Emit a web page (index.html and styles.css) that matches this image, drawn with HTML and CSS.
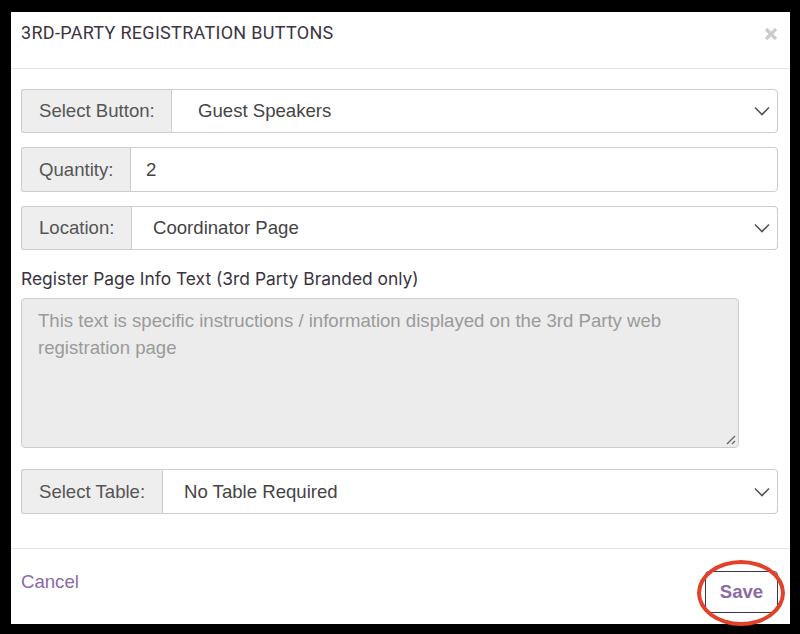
FILE: index.html
```html
<!DOCTYPE html>
<html>
<head>
<meta charset="utf-8">
<link rel="stylesheet" href="styles.css">
</head>
<body>
<div class="modal">
  <div class="modal-header">
    <h4 class="modal-title">3RD-PARTY REGISTRATION BUTTONS</h4>
    <svg class="close" viewBox="0 0 14 14"><path d="M2 2 L12 12 M12 2 L2 12" stroke="#cccccc" stroke-width="3.4"/></svg>
  </div>
  <div class="modal-body">
    <div class="input-group">
      <span class="addon addon-button">Select Button:</span>
      <div class="control select wide-pad">Guest Speakers<svg class="chev" viewBox="0 0 16 10"><path d="M1 1.5 L8 8.5 L15 1.5" fill="none" stroke="#555" stroke-width="1.6"/></svg></div>
    </div>
    <div class="input-group">
      <span class="addon addon-qty">Quantity:</span>
      <div class="control qty">2</div>
    </div>
    <div class="input-group">
      <span class="addon addon-loc">Location:</span>
      <div class="control select">Coordinator Page<svg class="chev" viewBox="0 0 16 10"><path d="M1 1.5 L8 8.5 L15 1.5" fill="none" stroke="#555" stroke-width="1.6"/></svg></div>
    </div>
    <label class="field-label">Register Page Info Text (3rd Party Branded only)</label>
    <div class="textarea">
      <span class="placeholder">This text is specific instructions / information displayed on the 3rd Party web registration page</span>
      <svg class="grip" viewBox="0 0 12 12"><path d="M11 3 L3 11 M11 8 L8 11" stroke="#666" stroke-width="1.3"/></svg>
    </div>
    <div class="input-group last">
      <span class="addon addon-table">Select Table:</span>
      <div class="control select">No Table Required<svg class="chev" viewBox="0 0 16 10"><path d="M1 1.5 L8 8.5 L15 1.5" fill="none" stroke="#555" stroke-width="1.6"/></svg></div>
    </div>
  </div>
  <div class="modal-footer">
    <a class="cancel">Cancel</a>
    <div class="save-wrap">
      <button class="save">Save</button>
      <span class="ring"></span>
    </div>
  </div>
</div>
</body>
</html>
```

FILE: styles.css
```css
html, body {
  margin: 0;
  padding: 0;
  background: #000;
}
body {
  width: 800px;
  height: 634px;
  overflow: hidden;
  font-family: "Liberation Sans", Arial, sans-serif;
}
.modal {
  margin: 12px 10px 0 11px;
  width: 779px;
  height: 612px;
  background: #fff;
  display: flex;
  flex-direction: column;
}
.modal-header {
  height: 57px;
  border-bottom: 1px solid #e5e5e5;
  display: flex;
  align-items: center;
  justify-content: space-between;
  padding: 0 12px 15px 10px;
  box-sizing: border-box;
  flex: none;
}
.modal-title {
  margin: 0;
  font-family: Roboto, "Noto Sans", sans-serif;
  font-weight: 400;
  font-size: 18px;
  color: #3b3443;
  letter-spacing: 0.3px;
}
.close {
  width: 14px;
  height: 14px;
  position: relative;
  top: 1px;
}
.modal-body {
  padding: 20px 12px 0 10px;
  flex: none;
  height: 480px;
  box-sizing: border-box;
  border-bottom: 1px solid #e5e5e5;
}
.input-group {
  display: flex;
  height: 44px;
  margin-bottom: 14px;
  font-size: 18.6px;
  color: #444;
}
.input-group.last {
  margin-top: 21px;
  height: 45px;
}
.input-group:nth-child(2) { height: 45px; }
.addon {
  background: #eeeeee;
  border: 1px solid #cccccc;
  border-right: none;
  border-radius: 3px 0 0 3px;
  display: flex;
  align-items: center;
  padding-left: 17px;
  box-sizing: border-box;
  color: #555;
  flex: none;
}
.addon-button { width: 150px; }
.addon-qty { width: 109px; }
.addon-loc { width: 110px; }
.addon-table { width: 141px; }
.control {
  flex: 1;
  border: 1px solid #cccccc;
  border-radius: 0 4px 4px 0;
  display: flex;
  align-items: center;
  padding-left: 21px;
  position: relative;
  color: #444;
}
.control.wide-pad { padding-left: 26px; }
.control.qty { padding-left: 15px; }
.chev {
  position: absolute;
  right: 7px;
  top: 50%;
  width: 16px;
  height: 10px;
  margin-top: -5px;
}
.field-label {
  display: block;
  font-family: Inter, Roboto, sans-serif;
  font-size: 17.4px;
  color: #3b3443;
  margin-top: 19px;
  height: 20px;
  line-height: 20px;
}
.textarea {
  margin-top: 9px;
  width: 718px;
  height: 150px;
  box-sizing: border-box;
  background: #ececec;
  border: 1px solid #cccccc;
  border-radius: 4px;
  padding: 8px 16px;
  font-size: 18.6px;
  line-height: 27px;
  color: #9a9a9a;
  position: relative;
}
.grip {
  position: absolute;
  right: 2px;
  bottom: 2px;
  width: 12px;
  height: 12px;
}
.modal-footer {
  flex: 1;
  display: flex;
  align-items: center;
  justify-content: space-between;
  padding: 0 12px 0 10px;
}
.cancel {
  font-size: 18.6px;
  color: #8b6aa8;
  position: relative;
  top: -5px;
}
.save-wrap {
  position: relative;
  top: 5px;
}
.save {
  width: 73px;
  height: 42px;
  background: #fff;
  border: 1px solid #3b3552;
  border-radius: 4px;
  font-family: "Liberation Sans", Arial, sans-serif;
  font-size: 18.6px;
  font-weight: bold;
  color: #8b6aa8;
  padding: 0;
}
.ring {
  position: absolute;
  left: -8px;
  top: -11px;
  width: 88px;
  height: 66px;
  border: 4px solid #e2412a;
  border-radius: 50%;
  box-sizing: border-box;
}
```
